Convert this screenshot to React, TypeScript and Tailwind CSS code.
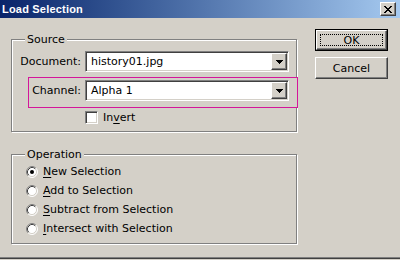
import React from "react";

const sunken =
  "border border-t-[#808080] border-l-[#808080] border-r-white border-b-white shadow-[inset_1px_1px_0_#404040,inset_-1px_-1px_0_#d4d0c8]";
const raised =
  "border border-t-white border-l-white border-r-[#404040] border-b-[#404040] shadow-[inset_-1px_-1px_0_#808080]";

function Arrow() {
  return (
    <svg width="7" height="4" viewBox="0 0 7 4" shapeRendering="crispEdges">
      <rect x="0" y="0" width="7" height="1" fill="#000" />
      <rect x="1" y="1" width="5" height="1" fill="#000" />
      <rect x="2" y="2" width="3" height="1" fill="#000" />
      <rect x="3" y="3" width="1" height="1" fill="#000" />
    </svg>
  );
}

function Select({ value }: { value: string }) {
  return (
    <div className={`w-[204px] h-[21px] bg-white p-[1px] flex items-stretch ${sunken}`}>
      <span className="flex-1 pl-[4px] flex items-center leading-[13px]">{value}</span>
      <div className={`w-[16px] h-[17px] bg-[#d4d0c8] flex items-center justify-center ${raised}`}>
        <Arrow />
      </div>
    </div>
  );
}

function Radio({ checked }: { checked?: boolean }) {
  return (
    <svg width="12" height="12" viewBox="0 0 12 12">
      <circle cx="6" cy="6" r="5" fill="#fff" />
      <path d="M2.11 9.89 A5.5 5.5 0 0 1 9.89 2.11" stroke="#808080" strokeWidth="1" fill="none" />
      <path d="M9.89 2.11 A5.5 5.5 0 0 1 2.11 9.89" stroke="#ffffff" strokeWidth="1" fill="none" />
      <path d="M2.82 9.18 A4.5 4.5 0 0 1 9.18 2.82" stroke="#404040" strokeWidth="1" fill="none" />
      <path d="M9.18 2.82 A4.5 4.5 0 0 1 2.82 9.18" stroke="#d4d0c8" strokeWidth="1" fill="none" />
      {checked && <circle cx="6" cy="6" r="2" fill="#000" />}
    </svg>
  );
}

function Group({
  title,
  height,
  children,
  className = "",
}: {
  title: string;
  height: string;
  children: React.ReactNode;
  className?: string;
}) {
  return (
    <div
      className={`relative w-[286px] ${height} border border-[#808080] shadow-[inset_1px_1px_0_#fff,1px_1px_0_#fff] ${className}`}
    >
      <span className="absolute left-[13px] top-[-7px] px-[2px] bg-[#d4d0c8] leading-[13px]">{title}</span>
      {children}
    </div>
  );
}

function RadioRow({ checked, ul, rest }: { checked?: boolean; ul: string; rest: string }) {
  return (
    <div className="h-[19px] flex items-center pl-[14px] gap-[5px]">
      <Radio checked={checked} />
      <span className="leading-[13px]">
        <span className="underline underline-offset-[2px]">{ul}</span>
        {rest}
      </span>
    </div>
  );
}

export default function App() {
  return (
    <div className="w-[400px] h-[260px] bg-[#d4d0c8] flex flex-col overflow-hidden text-[11px] text-black font-['DejaVu_Sans',sans-serif]">
      <div className="h-[18px] flex items-center justify-between pl-[2px] pr-[4px] bg-gradient-to-r from-[#0a246a] to-[#a6caf0]">
        <span className="text-white font-bold text-[11px] tracking-[0.2px] font-['Liberation_Sans',sans-serif] leading-[13px]">
          Load Selection
        </span>
        <div
          className={`w-[16px] h-[14px] bg-[#d4d0c8] flex items-center justify-center ${raised}`}
        >
          <svg width="8" height="7" viewBox="0 0 8 7" shapeRendering="crispEdges">
            <path d="M0 0h2v1h-2zM6 0h2v1h-2zM1 1h2v1h-2zM5 1h2v1h-2zM2 2h4v1h-4zM3 3h2v1h-2zM2 4h4v1h-4zM1 5h2v1h-2zM5 5h2v1h-2zM0 6h2v1h-2zM6 6h2v1h-2z" fill="#000" />
          </svg>
        </div>
      </div>

      <div className="flex-1 flex items-start pl-[11px] pt-[11px]">
        <div className="w-[288px] mt-[10px] flex flex-col">
          <Group title="Source" height="h-[93px]">
            <div className="mt-[11px] flex items-center gap-[4px]">
              <span className="w-[69px] text-right leading-[13px]">Document:</span>
              <Select value="history01.jpg" />
            </div>
            <div className="relative z-10 mt-[5px] ml-[16px] w-[270px] h-[31px] bg-[#d4169a] p-[1px]">
              <div className="w-full h-full bg-[#d4d0c8] pt-[2px] flex items-start gap-[4px]">
                <span className="w-[52px] text-right h-[21px] flex items-center justify-end leading-[13px]">Channel:</span>
                <Select value="Alpha 1" />
              </div>
            </div>
            <div className="mt-[3px] ml-[73px] flex items-center gap-[5px]">
              <div className={`w-[13px] h-[13px] bg-white ${sunken}`} />
              <span className="leading-[13px]">
                In<span className="underline underline-offset-[2px]">v</span>ert
              </span>
            </div>
          </Group>

          <Group title="Operation" height="h-[90px]" className="mt-[22px]">
            <div className="mt-[7px] flex flex-col">
              <RadioRow checked ul="N" rest="ew Selection" />
              <RadioRow ul="A" rest="dd to Selection" />
              <RadioRow ul="S" rest="ubtract from Selection" />
              <RadioRow ul="I" rest="ntersect with Selection" />
            </div>
          </Group>
        </div>

        <div className="ml-[16px] flex flex-col gap-[6px]">
          <div className="w-[73px] h-[22px] border border-black">
            <div className={`w-full h-full bg-[#d4d0c8] flex items-center justify-center p-[3px] ${raised}`}>
              <div className="w-full h-full border border-dotted border-black flex items-center justify-center leading-[13px]">
                OK
              </div>
            </div>
          </div>
          <div className={`w-[73px] h-[22px] bg-[#d4d0c8] flex items-center justify-center leading-[13px] ${raised}`}>
            Cancel
          </div>
        </div>
      </div>
      <div className="h-[1px] bg-[#808080]" />
      <div className="h-[1px] bg-[#404040]" />
      <div className="h-[1px] bg-[#d4d0c8]" />
    </div>
  );
}
